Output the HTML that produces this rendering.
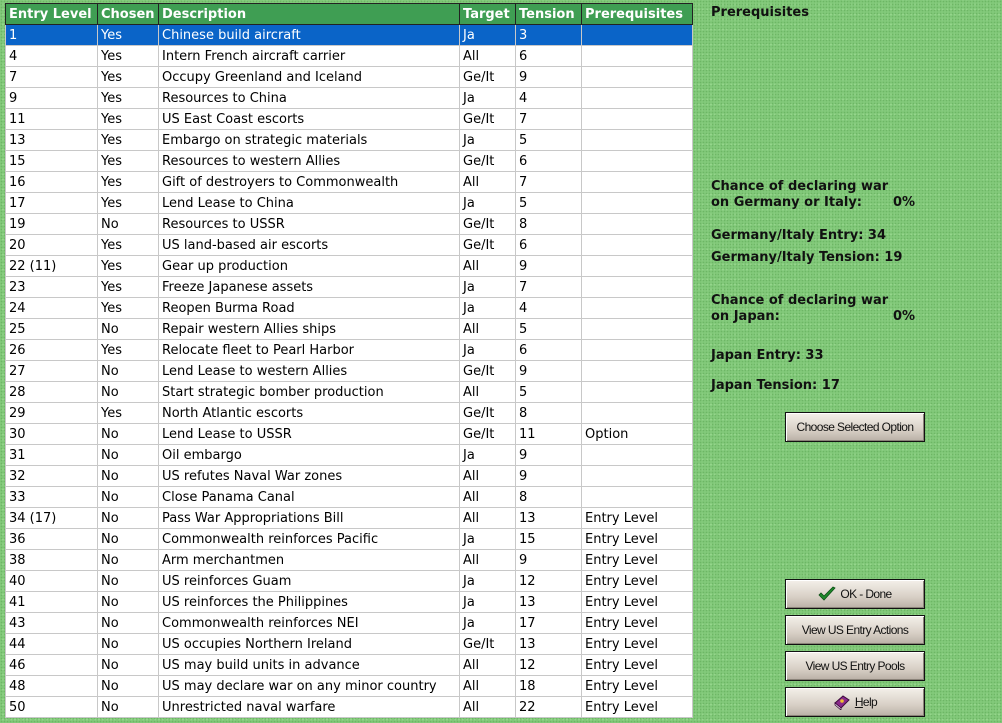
<!DOCTYPE html>
<html><head><meta charset="utf-8"><style>
html,body{margin:0;padding:0;width:1002px;height:723px;overflow:hidden;}
body{background:#82c97a;background-image:radial-gradient(#6db665 0.7px,transparent 0.9px),radial-gradient(#9ad890 0.7px,transparent 0.9px);background-size:3px 3px,4px 5px;background-position:0 0,1px 2px;font-family:"DejaVu Sans","Liberation Sans",sans-serif;position:relative;}
table{position:absolute;left:5px;top:3px;border-collapse:collapse;background:#fff;font-size:13px;table-layout:fixed;border:1px solid #888;}
td,th{height:20px;padding:1px 0 0 3px;white-space:nowrap;overflow:hidden;text-align:left;border:1px solid #c8c8c8;color:#000;box-sizing:border-box;}
td{height:21px;}
th{background:#3f9e53;color:#fff;font-weight:bold;border:1px solid #222;height:21px;}
tr.sel td{background:#0a64c8;color:#fff;}
.r{position:absolute;font-weight:bold;font-size:13px;color:#111;}
.btn{position:absolute;left:785px;width:138px;height:28px;border:1px solid #111;background:linear-gradient(#f4f0ea,#d8d0c6 60%,#b9b0a6);box-shadow:inset 1px 1px 0 #fff,inset -1px -1px 0 #8a8278;font-family:"Liberation Sans",sans-serif;font-size:12px;display:flex;align-items:center;justify-content:center;color:#111;letter-spacing:-0.6px;}
</style></head><body>
<table>
<colgroup><col style="width:92px"><col style="width:61px"><col style="width:301px"><col style="width:56px"><col style="width:66px"><col style="width:111px"></colgroup>
<tr><th>Entry Level</th><th>Chosen</th><th>Description</th><th>Target</th><th>Tension</th><th>Prerequisites</th></tr>
<tr class="sel"><td>1</td><td>Yes</td><td>Chinese build aircraft</td><td>Ja</td><td>3</td><td></td></tr>
<tr><td>4</td><td>Yes</td><td>Intern French aircraft carrier</td><td>All</td><td>6</td><td></td></tr>
<tr><td>7</td><td>Yes</td><td>Occupy Greenland and Iceland</td><td>Ge/It</td><td>9</td><td></td></tr>
<tr><td>9</td><td>Yes</td><td>Resources to China</td><td>Ja</td><td>4</td><td></td></tr>
<tr><td>11</td><td>Yes</td><td>US East Coast escorts</td><td>Ge/It</td><td>7</td><td></td></tr>
<tr><td>13</td><td>Yes</td><td>Embargo on strategic materials</td><td>Ja</td><td>5</td><td></td></tr>
<tr><td>15</td><td>Yes</td><td>Resources to western Allies</td><td>Ge/It</td><td>6</td><td></td></tr>
<tr><td>16</td><td>Yes</td><td>Gift of destroyers to Commonwealth</td><td>All</td><td>7</td><td></td></tr>
<tr><td>17</td><td>Yes</td><td>Lend Lease to China</td><td>Ja</td><td>5</td><td></td></tr>
<tr><td>19</td><td>No</td><td>Resources to USSR</td><td>Ge/It</td><td>8</td><td></td></tr>
<tr><td>20</td><td>Yes</td><td>US land-based air escorts</td><td>Ge/It</td><td>6</td><td></td></tr>
<tr><td>22 (11)</td><td>Yes</td><td>Gear up production</td><td>All</td><td>9</td><td></td></tr>
<tr><td>23</td><td>Yes</td><td>Freeze Japanese assets</td><td>Ja</td><td>7</td><td></td></tr>
<tr><td>24</td><td>Yes</td><td>Reopen Burma Road</td><td>Ja</td><td>4</td><td></td></tr>
<tr><td>25</td><td>No</td><td>Repair western Allies ships</td><td>All</td><td>5</td><td></td></tr>
<tr><td>26</td><td>Yes</td><td>Relocate fleet to Pearl Harbor</td><td>Ja</td><td>6</td><td></td></tr>
<tr><td>27</td><td>No</td><td>Lend Lease to western Allies</td><td>Ge/It</td><td>9</td><td></td></tr>
<tr><td>28</td><td>No</td><td>Start strategic bomber production</td><td>All</td><td>5</td><td></td></tr>
<tr><td>29</td><td>Yes</td><td>North Atlantic escorts</td><td>Ge/It</td><td>8</td><td></td></tr>
<tr><td>30</td><td>No</td><td>Lend Lease to USSR</td><td>Ge/It</td><td>11</td><td>Option</td></tr>
<tr><td>31</td><td>No</td><td>Oil embargo</td><td>Ja</td><td>9</td><td></td></tr>
<tr><td>32</td><td>No</td><td>US refutes Naval War zones</td><td>All</td><td>9</td><td></td></tr>
<tr><td>33</td><td>No</td><td>Close Panama Canal</td><td>All</td><td>8</td><td></td></tr>
<tr><td>34 (17)</td><td>No</td><td>Pass War Appropriations Bill</td><td>All</td><td>13</td><td>Entry Level</td></tr>
<tr><td>36</td><td>No</td><td>Commonwealth reinforces Pacific</td><td>Ja</td><td>15</td><td>Entry Level</td></tr>
<tr><td>38</td><td>No</td><td>Arm merchantmen</td><td>All</td><td>9</td><td>Entry Level</td></tr>
<tr><td>40</td><td>No</td><td>US reinforces Guam</td><td>Ja</td><td>12</td><td>Entry Level</td></tr>
<tr><td>41</td><td>No</td><td>US reinforces the Philippines</td><td>Ja</td><td>13</td><td>Entry Level</td></tr>
<tr><td>43</td><td>No</td><td>Commonwealth reinforces NEI</td><td>Ja</td><td>17</td><td>Entry Level</td></tr>
<tr><td>44</td><td>No</td><td>US occupies Northern Ireland</td><td>Ge/It</td><td>13</td><td>Entry Level</td></tr>
<tr><td>46</td><td>No</td><td>US may build units in advance</td><td>All</td><td>12</td><td>Entry Level</td></tr>
<tr><td>48</td><td>No</td><td>US may declare war on any minor country</td><td>All</td><td>18</td><td>Entry Level</td></tr>
<tr><td>50</td><td>No</td><td>Unrestricted naval warfare</td><td>All</td><td>22</td><td>Entry Level</td></tr>
</table>

<div class="r" style="left:711px;top:5px">Prerequisites</div>
<div class="r" style="left:711px;top:179px">Chance of declaring war</div>
<div class="r" style="left:711px;top:195px">on Germany or Italy:</div>
<div class="r" style="left:893px;top:195px">0%</div>
<div class="r" style="left:711px;top:228px">Germany/Italy Entry: 34</div>
<div class="r" style="left:711px;top:250px">Germany/Italy Tension: 19</div>
<div class="r" style="left:711px;top:293px">Chance of declaring war</div>
<div class="r" style="left:711px;top:309px">on Japan:</div>
<div class="r" style="left:893px;top:309px">0%</div>
<div class="r" style="left:711px;top:348px">Japan Entry: 33</div>
<div class="r" style="left:711px;top:378px">Japan Tension: 17</div>

<div class="btn" style="top:412px">Choose Selected Option</div>
<div class="btn" style="top:579px"><svg width="18" height="16" viewBox="0 0 18 16" style="margin-right:4px"><path d="M1 9 L6 14 L17 2 L15 1 L6 10 L3 7 Z" fill="#1e8a2a" stroke="#0b4d14" stroke-width="0.8"/></svg>OK - Done</div>
<div class="btn" style="top:615px">View US Entry Actions</div>
<div class="btn" style="top:651px">View US Entry Pools</div>
<div class="btn" style="top:687px"><svg width="18" height="16" viewBox="0 0 18 16" style="margin-right:4px"><path d="M2 9 L10 2 L16 6 L8 14 Z" fill="#8a2a8a" stroke="#3a0a3a" stroke-width="1"/><path d="M2 9 L2 11 L8 16 L8 14 Z" fill="#f0e0f0" stroke="#3a0a3a" stroke-width="0.8"/><circle cx="9" cy="7" r="1.8" fill="#f0c030"/></svg><u>H</u>elp</div>
</body></html>
